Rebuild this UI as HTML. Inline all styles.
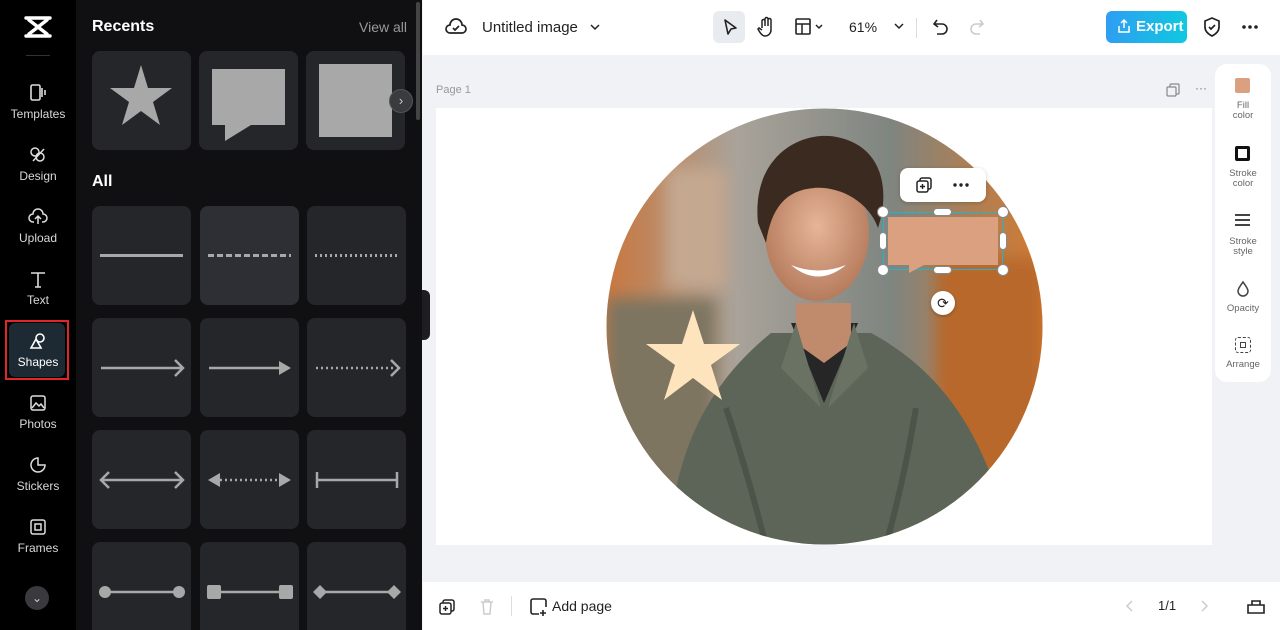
<!DOCTYPE html>
<html><head><meta charset="utf-8"><style>
*{box-sizing:border-box;margin:0;padding:0}
html,body{width:1280px;height:630px;overflow:hidden}
body{font-family:"Liberation Sans",sans-serif;background:#f0f2f5;position:relative}
.nav{position:absolute;left:0;top:0;width:76px;height:630px;background:#000;color:#ddd}
.nav .it{position:absolute;left:0;width:76px;text-align:center;font-size:12px;color:#d8d8d8}
.nav .it svg{display:block;margin:0 auto 4px}
.panel{position:absolute;left:76px;top:0;width:346px;height:630px;background:#101012;overflow:hidden}
.card{position:absolute;width:99px;height:99px;background:#25262a;border-radius:8px}
.top{position:absolute;left:423px;top:0;width:857px;height:55px;background:#fff}
.bot{position:absolute;left:423px;top:582px;width:857px;height:48px;background:#fff}
.side{position:absolute;left:1215px;top:64px;width:56px;height:318px;background:#fff;border-radius:12px;text-align:center;font-size:9.5px;color:#666;line-height:10px}
</style></head><body>
<div class="nav">
 <svg style="position:absolute;left:24px;top:15px" width="28" height="24" viewBox="0 0 28 24"><path d="M2 3h24M2 21h24M5 5l18 14M23 5L5 19" stroke="#fff" stroke-width="3.4" fill="none" stroke-linecap="round"/></svg>
 <div style="position:absolute;left:26px;top:55px;width:24px;height:1px;background:#333"></div>
 <div class="it" style="top:83px"><svg width="20" height="20" viewBox="0 0 20 20"><rect x="3" y="2" width="9" height="15" rx="1.5" fill="none" stroke="#ddd" stroke-width="1.6"/><path d="M14 5v9M17 7v5" stroke="#ddd" stroke-width="1.6"/></svg>Templates</div>
 <div class="it" style="top:145px"><svg width="20" height="20" viewBox="0 0 20 20"><circle cx="7" cy="7" r="4" fill="none" stroke="#ddd" stroke-width="1.5"/><circle cx="12" cy="12" r="4" fill="none" stroke="#ddd" stroke-width="1.5"/><path d="M5 16L16 4" stroke="#ddd" stroke-width="1.5"/></svg>Design</div>
 <div class="it" style="top:207px"><svg width="20" height="20" viewBox="0 0 20 20"><path d="M6 15H5a4 4 0 0 1 0-8 5 5 0 0 1 10 0 4 4 0 0 1 0 8h-1M10 17V9M7 12l3-3 3 3" fill="none" stroke="#ddd" stroke-width="1.5"/></svg>Upload</div>
 <div class="it" style="top:269px"><svg width="20" height="20" viewBox="0 0 20 20"><path d="M3 4h14M10 4v14M7 18h6" stroke="#ddd" stroke-width="1.6"/></svg>Text</div>
 <div style="position:absolute;left:5px;top:320px;width:64px;height:60px;border:2px solid #e0252b"></div>
 <div style="position:absolute;left:9px;top:323px;width:56px;height:54px;background:#1e2a33;border-radius:6px"></div>
 <div class="it" style="top:331px;color:#fff"><svg width="20" height="20" viewBox="0 0 20 20"><circle cx="12" cy="7" r="4" fill="none" stroke="#fff" stroke-width="1.6"/><path d="M3 17l5-9 5 9z" fill="none" stroke="#fff" stroke-width="1.6"/></svg>Shapes</div>
 <div class="it" style="top:393px"><svg width="20" height="20" viewBox="0 0 20 20"><rect x="3" y="3" width="14" height="14" rx="2" fill="none" stroke="#ddd" stroke-width="1.5"/><path d="M4 15l4-5 3 3 2-2 3 4" fill="none" stroke="#ddd" stroke-width="1.5"/></svg>Photos</div>
 <div class="it" style="top:455px"><svg width="20" height="20" viewBox="0 0 20 20"><path d="M10 3a7 7 0 1 0 7 7h-7z" fill="none" stroke="#ddd" stroke-width="1.5"/></svg>Stickers</div>
 <div class="it" style="top:517px"><svg width="20" height="20" viewBox="0 0 20 20"><rect x="3" y="3" width="14" height="14" rx="2" fill="none" stroke="#ddd" stroke-width="1.5"/><rect x="7" y="7" width="6" height="6" fill="none" stroke="#ddd" stroke-width="1.5"/></svg>Frames</div>
 <div style="position:absolute;left:25px;top:586px;width:24px;height:24px;border-radius:50%;background:#3a3a3e;color:#ccc;font-size:12px;text-align:center;line-height:24px">⌄</div>
</div>
<div class="panel">
 <div style="position:absolute;left:16px;top:18px;color:#fff;font-weight:bold;font-size:16px">Recents</div>
 <div style="position:absolute;right:15px;top:19px;color:#999;font-size:14px">View all</div>
 <div class="card" style="left:16px;top:51px"><svg width="99" height="99"><polygon points="49,14 56,37 80,37 61,51 68,74 49,60 30,74 37,51 18,37 42,37" fill="#a8a8a8"/></svg></div>
 <div class="card" style="left:123px;top:51px"><svg width="99" height="99"><path d="M13 18h73v56H52l-26 16V74H13z" fill="#a8a8a8"/></svg></div>
 <div class="card" style="left:230px;top:51px"><div style="position:absolute;left:13px;top:13px;width:73px;height:73px;background:#a8a8a8"></div></div>
 <div style="position:absolute;left:313px;top:89px;width:24px;height:24px;border-radius:50%;background:#3a3b3f;border:1px solid #555;color:#ccc;font-size:13px;text-align:center;line-height:21px">›</div>
 <div style="position:absolute;right:2px;top:2px;width:4px;height:118px;background:#444;border-radius:2px"></div>
 <div style="position:absolute;left:16px;top:173px;color:#fff;font-weight:bold;font-size:16px">All</div>
 <div class="card" style="left:16px;top:206px"><div style="position:absolute;left:8px;top:48px;width:83px;height:3px;background:#a8a8a8"></div></div>
 <div class="card" style="left:124px;top:206px;background:#2e2f34"><div style="position:absolute;left:8px;top:48px;width:83px;height:3px;background:repeating-linear-gradient(90deg,#a8a8a8 0 6px,transparent 6px 9px)"></div></div>
 <div class="card" style="left:231px;top:206px"><div style="position:absolute;left:8px;top:48px;width:83px;height:3px;background:repeating-linear-gradient(90deg,#a8a8a8 0 2px,transparent 2px 5px)"></div></div>
 <div class="card" style="left:16px;top:318px"><svg width="99" height="99"><path d="M9 50h82M83 42l8 8-8 8" stroke="#a8a8a8" stroke-width="2.5" fill="none"/></svg></div>
 <div class="card" style="left:124px;top:318px"><svg width="99" height="99"><path d="M9 50h72" stroke="#a8a8a8" stroke-width="2.5"/><path d="M79 43l12 7-12 7z" fill="#a8a8a8"/></svg></div>
 <div class="card" style="left:231px;top:318px"><svg width="99" height="99"><path d="M9 50h80" stroke="#a8a8a8" stroke-width="2.5" stroke-dasharray="2 3"/><path d="M84 42l8 8-8 8" stroke="#a8a8a8" stroke-width="2.5" fill="none"/></svg></div>
 <div class="card" style="left:16px;top:430px"><svg width="99" height="99"><path d="M9 50h82M17 42l-8 8 8 8M83 42l8 8-8 8" stroke="#a8a8a8" stroke-width="2.5" fill="none"/></svg></div>
 <div class="card" style="left:124px;top:430px"><svg width="99" height="99"><path d="M20 50h60" stroke="#a8a8a8" stroke-width="2.5" stroke-dasharray="2 3"/><path d="M8 50l12-7v14zM91 50l-12-7v14z" fill="#a8a8a8"/></svg></div>
 <div class="card" style="left:231px;top:430px"><svg width="99" height="99"><path d="M10 50h80M10 42v16M90 42v16" stroke="#a8a8a8" stroke-width="2.5" fill="none"/></svg></div>
 <div class="card" style="left:16px;top:542px"><svg width="99" height="99"><path d="M13 50h74" stroke="#a8a8a8" stroke-width="2.5"/><circle cx="13" cy="50" r="6" fill="#a8a8a8"/><circle cx="87" cy="50" r="6" fill="#a8a8a8"/></svg></div>
 <div class="card" style="left:124px;top:542px"><svg width="99" height="99"><path d="M13 50h74" stroke="#a8a8a8" stroke-width="2.5"/><rect x="7" y="43" width="14" height="14" rx="2" fill="#a8a8a8"/><rect x="79" y="43" width="14" height="14" rx="2" fill="#a8a8a8"/></svg></div>
 <div class="card" style="left:231px;top:542px"><svg width="99" height="99"><path d="M13 50h74" stroke="#a8a8a8" stroke-width="2.5"/><path d="M6 50l7-7 7 7-7 7zM80 50l7-7 7 7-7 7z" fill="#a8a8a8"/></svg></div>
</div>
<div style="position:absolute;left:422px;top:290px;width:8px;height:50px;background:#1e1e20;border-radius:0 6px 6px 0"></div>
<div class="top">
 <svg style="position:absolute;left:22px;top:17px" width="22" height="20" viewBox="0 0 22 20"><path d="M6 16H5a4 4 0 0 1 0-8 6 6 0 0 1 12 0 4 4 0 0 1 0 8z M8 11l2 2 4-4" fill="none" stroke="#222" stroke-width="1.7"/></svg>
 <div style="position:absolute;left:59px;top:19px;font-size:15px;color:#222">Untitled image</div>
 <svg style="position:absolute;left:166px;top:22px" width="12" height="10"><path d="M2 3l4 4 4-4" fill="none" stroke="#222" stroke-width="1.5"/></svg>
 <div style="position:absolute;left:290px;top:11px;width:32px;height:32px;background:#e8ebef;border-radius:6px"></div>
 <svg style="position:absolute;left:298px;top:17px" width="18" height="20"><path d="M4 3l11 8-5 1-3 5z" fill="none" stroke="#222" stroke-width="1.6" stroke-linejoin="round"/></svg>
 <svg style="position:absolute;left:333px;top:16px" width="20" height="22"><path d="M6 12V5a1.5 1.5 0 0 1 3 0v5V3a1.5 1.5 0 0 1 3 0v7V4a1.5 1.5 0 0 1 3 0v10a6 6 0 0 1-6 6c-3 0-5-3-7-7l1-1 3 2" fill="none" stroke="#222" stroke-width="1.5"/></svg>
 <svg style="position:absolute;left:372px;top:18px" width="30" height="18"><rect x="1" y="1" width="14" height="15" rx="1" fill="none" stroke="#222" stroke-width="1.6"/><path d="M1 6h14M7 6v10M21 7l3 3 3-3" fill="none" stroke="#222" stroke-width="1.5"/></svg>
 <div style="position:absolute;left:426px;top:19px;font-size:14px;color:#222">61%</div>
 <svg style="position:absolute;left:470px;top:21px" width="12" height="10"><path d="M2 3l4 4 4-4" fill="none" stroke="#222" stroke-width="1.5"/></svg>
 <div style="position:absolute;left:493px;top:18px;width:1px;height:20px;background:#ddd"></div>
 <svg style="position:absolute;left:508px;top:17px" width="20" height="20"><path d="M6 3L3 7l4 3M3 7h8a5 5 0 0 1 0 10H6" fill="none" stroke="#222" stroke-width="1.6"/></svg>
 <svg style="position:absolute;left:545px;top:17px" width="20" height="20"><path d="M12 3l3 4-4 3M15 7H8a5 5 0 0 0 0 10h4" fill="none" stroke="#ccc" stroke-width="1.6"/></svg>
 <div style="position:absolute;left:683px;top:11px;width:81px;height:32px;border-radius:6px;background:linear-gradient(90deg,#2f9ef2,#10c8e0);color:#fff;font-weight:bold;font-size:15px;line-height:32px;padding-left:30px">Export</div>
 <svg style="position:absolute;left:693px;top:18px" width="16" height="16"><path d="M8 2v8M5 5l3-3 3 3M3 8v6h10V8" fill="none" stroke="#fff" stroke-width="1.5"/></svg>
 <svg style="position:absolute;left:779px;top:16px" width="20" height="22"><path d="M10 2l7 3v6c0 4-3 7-7 9-4-2-7-5-7-9V5z M7 11l2 2 4-4" fill="none" stroke="#222" stroke-width="1.7"/></svg>
 <svg style="position:absolute;left:818px;top:24px" width="18" height="6"><circle cx="3" cy="3" r="1.8" fill="#222"/><circle cx="9" cy="3" r="1.8" fill="#222"/><circle cx="15" cy="3" r="1.8" fill="#222"/></svg>
</div>
<div style="position:absolute;left:436px;top:84px;font-size:11px;color:#999">Page 1</div>
<svg style="position:absolute;left:1166px;top:83px" width="14" height="14"><rect x="4" y="1" width="9" height="10" rx="1" fill="none" stroke="#888" stroke-width="1.2"/><rect x="1" y="4" width="9" height="9" rx="1" fill="#f0f2f5" stroke="#888" stroke-width="1.2"/></svg>
<div style="position:absolute;left:1195px;top:81px;font-size:12px;color:#777">···</div>
<div style="position:absolute;left:436px;top:108px;width:776px;height:437px;background:#fff"></div>
<svg style="position:absolute;left:606px;top:108px" width="437" height="437" viewBox="0 0 437 437">
 <defs>
  <clipPath id="c"><circle cx="218.5" cy="218.5" r="218"/></clipPath>
  <linearGradient id="bg" x1="0" x2="1" y1="0" y2="0"><stop offset="0" stop-color="#c9773f"/><stop offset="0.3" stop-color="#a9a39a"/><stop offset="0.65" stop-color="#7f8580"/><stop offset="1" stop-color="#d57a30"/></linearGradient>
  <radialGradient id="sk" cx="0.5" cy="0.45" r="0.6"><stop offset="0" stop-color="#e6b598"/><stop offset="1" stop-color="#b27658"/></radialGradient>
  <filter id="b"><feGaussianBlur stdDeviation="8"/></filter>
 </defs>
 <g clip-path="url(#c)">
  <rect width="437" height="437" fill="url(#bg)"/>
  <g filter="url(#b)">
   <rect x="0" y="190" width="110" height="250" fill="#7d7560"/>
   <rect x="60" y="60" width="60" height="120" fill="#c4a890"/>
   <rect x="330" y="150" width="107" height="230" fill="#b8682a"/>
  </g>
  <path d="M62 437 C70 330 110 270 165 225 L265 225 C330 260 380 320 405 437z" fill="#5d6558"/>
  <path d="M120 300 C140 360 150 400 160 437 M310 300 C300 360 290 400 280 437" stroke="#4c5348" stroke-width="6" fill="none"/>
  <path d="M185 215 L218 295 L252 215z" fill="#262626"/>
  <path d="M190 195h55v40l-27 20-28-20z" fill="#c08a6c"/>
  <path d="M190 215 L175 260 L215 300z M248 215 L262 260 L222 300z" fill="#6a7264"/>
  <ellipse cx="211" cy="125" rx="52" ry="68" fill="url(#sk)"/>
  <path d="M152 115 C145 45 200 20 235 30 C275 40 285 80 272 120 C262 92 232 78 208 80 C180 82 165 100 160 135z" fill="#3b2a1f"/>
  <path d="M185 157 Q212 180 240 157 Q212 168 185 157z" fill="#fff"/>
 </g>
</svg>
<svg style="position:absolute;left:645px;top:310px" width="96" height="92"><polygon points="48,0 59,34 95,34 66,55 77,90 48,68 19,90 30,55 1,34 37,34" fill="#fde4bd"/></svg>
<div style="position:absolute;left:900px;top:168px;width:86px;height:34px;background:#fff;border-radius:8px;box-shadow:0 1px 4px rgba(0,0,0,.2)"></div>
<svg style="position:absolute;left:915px;top:176px" width="18" height="18"><rect x="5" y="2" width="11" height="11" rx="2" fill="none" stroke="#222" stroke-width="1.5"/><rect x="2" y="5" width="11" height="11" rx="2" fill="#fff" stroke="#222" stroke-width="1.5"/><path d="M7.5 8v5M5 10.5h5" stroke="#222" stroke-width="1.4"/></svg>
<svg style="position:absolute;left:952px;top:182px" width="18" height="6"><circle cx="3" cy="3" r="1.7" fill="#222"/><circle cx="9" cy="3" r="1.7" fill="#222"/><circle cx="15" cy="3" r="1.7" fill="#222"/></svg>
<div style="position:absolute;left:883px;top:212px;width:120px;height:58px;border:1.5px solid #1fb5d0"></div>
<svg style="position:absolute;left:884px;top:213px" width="118" height="60"><path d="M4 4h110v48H40l-15 8V52H4z" fill="#daa07f"/></svg>
<div style="position:absolute;left:877px;top:206px;width:12px;height:12px;border-radius:50%;background:#fff;border:1px solid #888"></div>
<div style="position:absolute;left:997px;top:206px;width:12px;height:12px;border-radius:50%;background:#fff;border:1px solid #888"></div>
<div style="position:absolute;left:877px;top:264px;width:12px;height:12px;border-radius:50%;background:#fff;border:1px solid #888"></div>
<div style="position:absolute;left:997px;top:264px;width:12px;height:12px;border-radius:50%;background:#fff;border:1px solid #888"></div>
<div style="position:absolute;left:933px;top:208px;width:19px;height:8px;border-radius:4px;background:#fff;border:1px solid #888"></div>
<div style="position:absolute;left:933px;top:266px;width:19px;height:8px;border-radius:4px;background:#fff;border:1px solid #888"></div>
<div style="position:absolute;left:879px;top:232px;width:8px;height:18px;border-radius:4px;background:#fff;border:1px solid #888"></div>
<div style="position:absolute;left:999px;top:232px;width:8px;height:18px;border-radius:4px;background:#fff;border:1px solid #888"></div>
<div style="position:absolute;left:931px;top:291px;width:24px;height:24px;border-radius:50%;background:#fff;box-shadow:0 1px 3px rgba(0,0,0,.3);font-size:14px;text-align:center;line-height:24px;color:#222">⟳</div>
<div class="side">
 <div style="position:absolute;left:20px;top:14px;width:15px;height:15px;background:#daa07f;border-radius:2px"></div>
 <div style="position:absolute;left:0;width:56px;top:37px">Fill<br>color</div>
 <div style="position:absolute;left:20px;top:82px;width:15px;height:15px;border:3px solid #111;border-radius:2px"></div>
 <div style="position:absolute;left:0;width:56px;top:105px">Stroke<br>color</div>
 <div style="position:absolute;left:20px;top:150px;width:15px;height:2px;background:#444;box-shadow:0 5px 0 #444,0 10px 0 #444"></div>
 <div style="position:absolute;left:0;width:56px;top:173px">Stroke<br>style</div>
 <svg style="position:absolute;left:20px;top:216px" width="16" height="18"><path d="M8 2C5 6 3 9 3 11a5 5 0 0 0 10 0c0-2-2-5-5-9z" fill="none" stroke="#444" stroke-width="1.5"/></svg>
 <div style="position:absolute;left:0;width:56px;top:240px">Opacity</div>
 <div style="position:absolute;left:20px;top:273px;width:16px;height:16px;border:1.5px dashed #444;border-radius:3px"></div>
 <div style="position:absolute;left:25px;top:278px;width:6px;height:6px;border:1.5px solid #444"></div>
 <div style="position:absolute;left:0;width:56px;top:296px">Arrange</div>
</div>
<div class="bot">
 <svg style="position:absolute;left:15px;top:16px" width="18" height="18"><rect x="5" y="2" width="11" height="11" rx="2" fill="none" stroke="#222" stroke-width="1.5"/><rect x="2" y="5" width="11" height="11" rx="2" fill="#fff" stroke="#222" stroke-width="1.5"/><path d="M7.5 8v5M5 10.5h5" stroke="#222" stroke-width="1.4"/></svg>
 <svg style="position:absolute;left:56px;top:16px" width="16" height="18"><path d="M2 4h12M6 4V2h4v2M4 4l1 12h6l1-12" fill="none" stroke="#ccc" stroke-width="1.5"/></svg>
 <div style="position:absolute;left:88px;top:14px;width:1px;height:20px;background:#ddd"></div>
 <svg style="position:absolute;left:106px;top:15px" width="20" height="20"><path d="M10 17H4a2 2 0 0 1-2-2V4a2 2 0 0 1 2-2h11a2 2 0 0 1 2 2v6M14 13v6M11 16h6" fill="none" stroke="#222" stroke-width="1.6"/></svg>
 <div style="position:absolute;left:129px;top:16px;font-size:14px;color:#222">Add page</div>
 <svg style="position:absolute;left:702px;top:17px" width="10" height="14"><path d="M7 2L2 7l5 5" fill="none" stroke="#ccc" stroke-width="1.5"/></svg>
 <div style="position:absolute;left:735px;top:16px;font-size:13px;color:#222">1/1</div>
 <svg style="position:absolute;left:776px;top:17px" width="10" height="14"><path d="M3 2l5 5-5 5" fill="none" stroke="#ccc" stroke-width="1.5"/></svg>
 <svg style="position:absolute;left:823px;top:15px" width="20" height="18"><path d="M2 8h16v8H2zM6 8V4h8v4" fill="none" stroke="#222" stroke-width="1.6"/></svg>
</div>
</body></html>
